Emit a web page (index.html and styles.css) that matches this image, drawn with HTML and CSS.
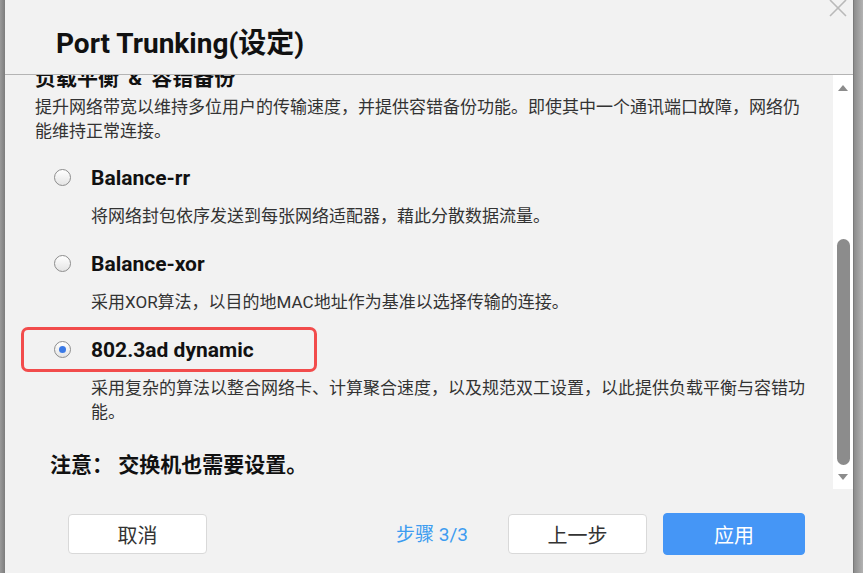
FILE: index.html
```html
<!DOCTYPE html>
<html lang="zh-CN">
<head>
    <meta charset="UTF-8">
    <meta name="viewport" content="width=device-width, initial-scale=1.0">
    <title>Port Trunking(设定)</title>
    <link rel="stylesheet" href="styles.css">
</head>
<body>

    <div class="side-left"></div>

    <div class="dialog">
        <div class="dialog-header">
            <h1>Port Trunking(设定)</h1>
            <span class="close">
                <svg width="18" height="18" viewBox="0 0 18 18">
                    <path d="M1 1 L17 17 M17 1 L1 17" stroke="#b9b9b9" stroke-width="1.6" fill="none"/>
                </svg>
            </span>
        </div>

        <div class="dialog-body">
            <div class="content">
                <div class="inner">
                    <h2>负载平衡 &amp; 容错备份</h2>
                    <p class="intro">提升网络带宽以维持多位用户的传输速度，并提供容错备份功能。即使其中一个通讯端口故障，网络仍能维持正常连接。</p>

                    <div class="option">
                        <div class="option-head">
                            <span class="radio"></span>
                            <span class="label">Balance-rr</span>
                        </div>
                        <p class="desc">将网络封包依序发送到每张网络适配器，藉此分散数据流量。</p>
                    </div>

                    <div class="option">
                        <div class="option-head">
                            <span class="radio"></span>
                            <span class="label">Balance-xor</span>
                        </div>
                        <p class="desc">采用XOR算法，以目的地MAC地址作为基准以选择传输的连接。</p>
                    </div>

                    <div class="option">
                        <div class="option-head highlight">
                            <span class="radio checked"></span>
                            <span class="label">802.3ad dynamic</span>
                        </div>
                        <p class="desc">采用复杂的算法以整合网络卡、计算聚合速度，以及规范双工设置，以此提供负载平衡与容错功能。</p>
                    </div>

                    <p class="note">注意： 交换机也需要设置。</p>
                </div>
            </div>

            <div class="scrollbar">
                <span class="arrow up"></span>
                <span class="thumb"></span>
                <span class="arrow down"></span>
            </div>
        </div>

        <div class="dialog-footer">
            <button class="btn">取消</button>
            <span class="step">步骤 3/3</span>
            <button class="btn">上一步</button>
            <button class="btn primary">应用</button>
        </div>
    </div>

    <div class="side-right"></div>

</body>
</html>
```

FILE: styles.css
```css
html, body {
    margin: 0;
    height: 573px;
    overflow: hidden;
}
body {
    display: flex;
    background: #8e8e8e;
    font-family: Roboto, "Noto Sans CJK SC", sans-serif;
    color: #333;
}
.side-left {
    width: 5px;
    background: linear-gradient(to right, #9a9a9a, #7d7d7d);
}
.side-right {
    flex: 1;
    border-left: 1px solid #7a7a7a;
    background: linear-gradient(to right, #8c8c8c, #b2b2b2);
}
.dialog {
    width: 848px;
    height: 573px;
    background: #f2f2f2;
    display: flex;
    flex-direction: column;
}
.dialog-header {
    position: relative;
    height: 75px;
    border-bottom: 1px solid #b4b4b4;
    padding: 26px 0 0 51px;
    box-sizing: border-box;
}
.dialog-header h1 {
    margin: 0;
    font-size: 28px;
    line-height: 36px;
    font-weight: bold;
    color: #111;
}
.close {
    position: absolute;
    right: 6px;
    top: -1px;
}
.dialog-body {
    display: flex;
    height: 414px;
}
.content {
    flex: 1;
    overflow: hidden;
    padding: 0 21px 0 30px;
}
.inner {
    margin-top: -11px;
}
h2 {
    margin: 0 0 3px;
    font-size: 21px;
    line-height: 28px;
    font-weight: bold;
    word-spacing: 4px;
    color: #111;
}
p {
    margin: 0;
}
.intro {
    font-size: 17px;
    line-height: 24px;
    margin-bottom: 12px;
}
.option-head {
    display: flex;
    align-items: center;
    width: 296px;
    height: 45px;
    margin-left: -14px;
    padding-left: 30px;
    box-sizing: border-box;
    border: 3px solid transparent;
    border-radius: 7px;
}
.option-head.highlight {
    border-color: #f24c4c;
}
.radio {
    width: 15px;
    height: 15px;
    border: 1px solid #8d8d8d;
    border-radius: 50%;
    background: linear-gradient(#ffffff, #e4e4e4);
    display: flex;
    align-items: center;
    justify-content: center;
}
.radio.checked::after {
    content: "";
    width: 7px;
    height: 7px;
    border-radius: 50%;
    background: #3a79e6;
}
.label {
    margin-left: 20px;
    font-size: 21px;
    font-weight: bold;
    color: #111;
}
.desc {
    font-size: 17px;
    line-height: 24px;
    padding-left: 56px;
    margin: 4px 0 13px;
}
.note {
    margin-top: 26px;
    padding-left: 15px;
    font-size: 21px;
    line-height: 30px;
    font-weight: bold;
    color: #111;
}
.scrollbar {
    width: 20px;
    background: #fff;
    display: flex;
    flex-direction: column;
    align-items: center;
}
.arrow {
    width: 0;
    height: 0;
    border-left: 5px solid transparent;
    border-right: 5px solid transparent;
}
.arrow.up {
    margin-top: 10px;
    border-bottom: 6px solid #8c8c8c;
}
.arrow.down {
    margin-top: 9px;
    border-top: 6px solid #8c8c8c;
}
.thumb {
    width: 13px;
    height: 226px;
    margin-top: 148px;
    border-radius: 7px;
    background: #8c8c8c;
}
.dialog-footer {
    flex: 1;
    display: flex;
    align-items: flex-start;
    padding: 25px 0 0 63px;
}
.btn {
    width: 139px;
    height: 40px;
    border: 1px solid #d9d9d9;
    border-radius: 4px;
    background: #fff;
    font-family: inherit;
    font-size: 20px;
    color: #333;
    padding: 0;
}
.btn.primary {
    width: 142px;
    height: 42px;
    margin: -1px 0 0 16px;
    background: #4596f6;
    border-color: #4596f6;
    color: #fff;
}
.step {
    width: 73px;
    margin: 0 39px 0 189px;
    font-size: 19px;
    line-height: 42px;
    white-space: nowrap;
    color: #3d9cf0;
}
```
